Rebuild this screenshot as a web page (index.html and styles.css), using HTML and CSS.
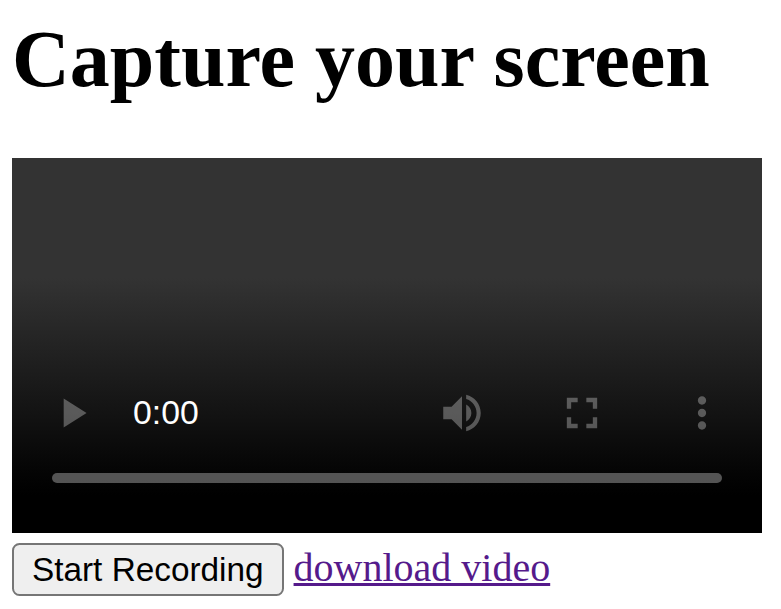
FILE: index.html
```html
<!DOCTYPE html>
<html>
  <head>
    <meta charset="utf-8">
    <title>Capture your screen</title>
    <link rel="stylesheet" href="styles.css">
  </head>
  <body>
    <h1>Capture your screen</h1>

    <!-- Video player with its default controls -->
    <div class="player">
      <div class="player-controls">
        <div class="control-row">
          <span class="control">
            <svg class="icon" viewBox="0 0 24 24"><path d="M8 5v14l11-7z"/></svg>
          </span>
          <span class="time">0:00</span>
          <span class="spacer"></span>
          <span class="control">
            <svg class="icon" viewBox="0 0 24 24"><path d="M3 9v6h4l5 5V4L7 9H3zm13.5 3c0-1.77-1.02-3.29-2.5-4.03v8.05c1.48-.73 2.5-2.25 2.5-4.02zM14 3.23v2.06c2.89.86 5 3.54 5 6.71s-2.11 5.85-5 6.71v2.06c4.01-.91 7-4.49 7-8.77s-2.99-7.86-7-8.77z"/></svg>
          </span>
          <span class="control">
            <svg class="icon icon-wide" viewBox="0 0 24 24"><path d="M7 14H5v5h5v-2H7v-3zm-2-4h2V7h3V5H5v5zm12 7h-3v2h5v-5h-2v3zM14 5v2h3v3h2V5h-5z"/></svg>
          </span>
          <span class="control">
            <svg class="icon" viewBox="0 0 24 24"><path d="M12 8c1.1 0 2-.9 2-2s-.9-2-2-2-2 .9-2 2 .9 2 2 2zm0 2c-1.1 0-2 .9-2 2s.9 2 2 2 2-.9 2-2-.9-2-2-2zm0 6c-1.1 0-2 .9-2 2s.9 2 2 2 2-.9 2-2-.9-2-2-2z"/></svg>
          </span>
        </div>
        <div class="timeline"></div>
      </div>
    </div>

    <div class="actions">
      <button type="button">Start Recording</button>
      <a href="#">download video</a>
    </div>
  </body>
</html>
```

FILE: styles.css
```css
body {
  margin: 12px;
  background-color: white;
  font-family: "Liberation Serif", serif;
  font-size: 40px;
}

h1 {
  margin: 2px 0 53px;
  font-size: 80px;
}

/* Video player */
.player {
  display: flex;
  flex-direction: column;
  justify-content: flex-end;
  width: 750px;
  height: 375px;
  background: linear-gradient(#333333 0%, #333333 32%, #161616 64.5%, #050505 83%, #000000 90%);
}

.player-controls {
  padding-bottom: 50px;
}

.control-row {
  display: flex;
  align-items: center;
  height: 120px;
}

.control {
  display: flex;
  justify-content: center;
  align-items: center;
  width: 120px;
  height: 120px;
}

.icon {
  width: 50px;
  height: 50px;
  fill: rgba(255, 255, 255, 0.3);
}

.icon-wide {
  width: 52px;
  height: 52px;
}

.time {
  margin-left: 1px;
  margin-bottom: 2px;
  font-family: "Liberation Sans", sans-serif;
  font-size: 33.75px;
  color: white;
}

.spacer {
  flex: 1;
}

.timeline {
  height: 10px;
  margin: 0 40px;
  border-radius: 5px;
  background-color: rgba(255, 255, 255, 0.32);
}

/* Button and download link */
.actions {
  margin-top: 10px;
}

button {
  padding: 5.5px 18px;
  border: 2.5px solid #767676;
  border-radius: 7.5px;
  background-color: #efefef;
  color: black;
  font-family: "Liberation Sans", sans-serif;
  font-size: 33.33px;
}

a {
  color: #551a8b;
  text-decoration-thickness: 3px;
}
```
